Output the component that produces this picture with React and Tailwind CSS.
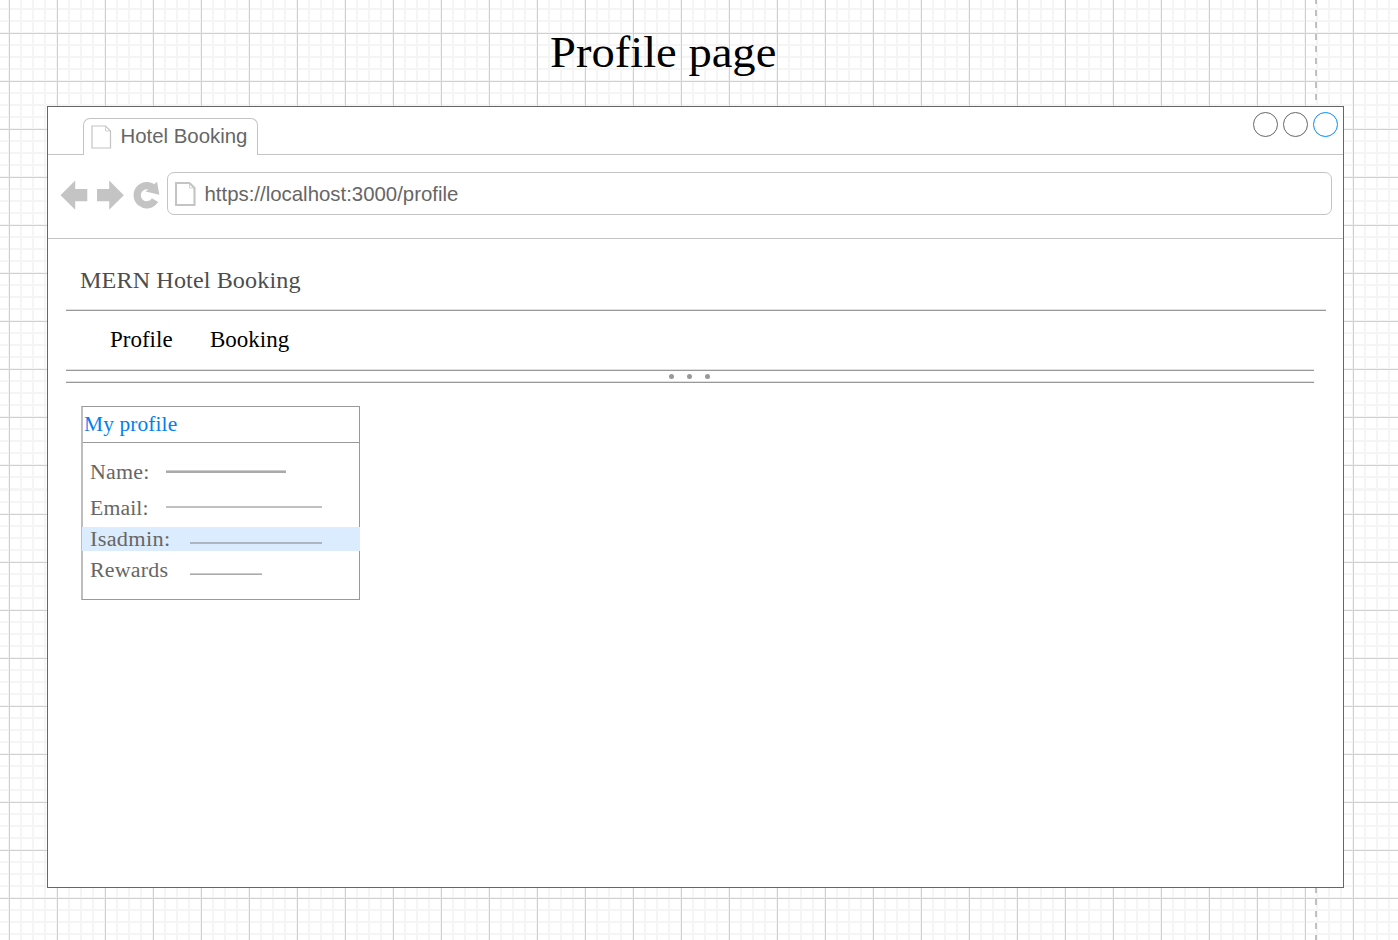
const serif = "font-['Georgia','Liberation_Serif',serif]";

function PageIcon({ className, weight }) {
  return (
    <svg className={className} viewBox="0 0 21 24" fill="none" stroke="#c4c4c4">
      <path strokeWidth={weight} d="M1 1H14.5L19.5 6V23H1Z" />
      <path strokeWidth="1" strokeOpacity="0.75" d="M14.5 1.5V6H19.5" />
    </svg>
  );
}

function Rule({ className }) {
  return <div className={`h-[2px] border-b border-[#999999] bg-[#e0e0e0] ${className}`} />;
}

function TitleBar() {
  return (
    <div className="flex h-[48px] items-end border-b border-[#c4c4c4] pl-[35px]">
      <div className="-mb-px flex h-[37px] w-[175px] items-start rounded-t-[7px] border border-b-0 border-[#c4c4c4] bg-white pl-[7px] pt-[6px]">
        <PageIcon className="h-6 w-[21px]" weight="1.2" />
        <span className="ml-[8.5px] -mt-px whitespace-nowrap text-[20.4px] leading-[24px] text-[#666666]">Hotel Booking</span>
      </div>
      <div className="mb-[17px] ml-auto mr-[5px] flex gap-[5px]">
        <div className="size-[25px] rounded-full border-[1.3px] border-[#666666]" />
        <div className="size-[25px] rounded-full border-[1.3px] border-[#666666]" />
        <div className="size-[25px] rounded-full border-[1.3px] border-[#008cff]" />
      </div>
    </div>
  );
}

function AddressBar() {
  return (
    <div className="flex h-[84px] items-start border-b border-[#c4c4c4] pl-[12px] pt-[17px]">
      <svg className="h-[43px] w-[100px] shrink-0" viewBox="60 172 100 43">
        <path fill="#c4c4c4" d="M60.5 195.2 75.2 180.6V189H87.3V201.3H75.2V209.8Z" />
        <path fill="#c4c4c4" d="M123.8 195.2 109.2 180.6V189H97V201.3H109.2V209.8Z" />
        <path fill="none" stroke="#c4c4c4" strokeWidth="7.2" d="M155 200.1A9.6 9.6 0 1 1 154.4 189.4" />
        <path fill="#c4c4c4" d="M157 181.8 159.4 194.8 145.6 191.6Z" />
      </svg>
      <div className="ml-[7px] flex h-[43px] w-[1165px] items-start rounded-[7px] border border-[#c4c4c4] pl-[7px] pt-[9px]">
        <PageIcon className="h-6 w-[21px]" weight="2.1" />
        <span className="ml-[8.5px] whitespace-nowrap text-[20.4px] leading-[24px] text-[#666666]">https://localhost:3000/profile</span>
      </div>
    </div>
  );
}

function CardLabel({ children, className, text }) {
  return (
    <span className={className}>
      <span className={`inline-block origin-left whitespace-nowrap ${text}`}>{children}</span>
    </span>
  );
}

function ProfileCard() {
  return (
    <div className="ml-[33px] mt-[23px] flex h-[194px] w-[279px] flex-col border border-l-2 border-[#999999] border-l-[#bdbdbd] text-[20.5px] leading-[24px] text-[#666666]">
      <div className="h-[36px] border-b border-[#999999] pl-px pt-[5px] text-[#0080f0]">
        <span className="inline-block origin-left scale-x-[1.045] tracking-[0.1px]">My profile</span>
      </div>
      <div className="flex h-[48px] items-start pl-[7px] pt-[17px]">
        <CardLabel className="w-[76px]" text="scale-x-[1.07] tracking-[0.2px]">Name:</CardLabel>
        <div className="mt-[10px] h-[3px] w-[120px] border-t border-[#cccccc] bg-[#aaaaaa]" />
      </div>
      <div className="flex h-[36px] items-start pl-[7px] pt-[5px]">
        <CardLabel className="w-[76px]" text="scale-x-[1.06] tracking-[0.1px]">Email:</CardLabel>
        <div className="mt-[10px] h-[2px] w-[156px] bg-[#c0c0c0]" />
      </div>
      <div className="relative -ml-px -mr-px flex h-[24px] items-start bg-[#dbecfe] pl-[8px]">
        <CardLabel className="w-[100px]" text="scale-x-[1.09] tracking-[0.25px]">Isadmin:</CardLabel>
        <div className="mt-[15px] h-[2px] w-[132px] bg-[#adb5be]" />
      </div>
      <div className="flex items-start pl-[7px] pt-[7px]">
        <CardLabel className="w-[100px]" text="scale-x-[1.07] tracking-[0.2px]">Rewards</CardLabel>
        <div className="mt-[15px] h-[2px] w-[72px] border-b border-[#aaaaaa] bg-[#cccccc]" />
      </div>
    </div>
  );
}

function BrowserWindow() {
  return (
    <main className="relative ml-[47px] h-[782px] w-[1297px] border border-[#666666] bg-white">
      <TitleBar />
      <AddressBar />
      <div className={serif}>
        <div className="h-[70px] pl-[32px] pt-[28px] text-[23px] leading-[28px] text-[#4d4d4d]">
          <span className="inline-block origin-left scale-x-[1.05] tracking-[0.1px]">MERN Hotel Booking</span>
        </div>
        <Rule className="ml-[18px] w-[1260px]" />
        <nav className="flex h-[58px] pl-[62px] pt-[15px] text-[23px] leading-[28px] text-black">
          <span className="w-[100px]">Profile</span>
          <span>Booking</span>
        </nav>
        <Rule className="ml-[18px] w-[1248px]" />
        <div className="flex h-[10px] items-center justify-center gap-[13px] pr-[12px] pt-px">
          <i className="size-[5px] rounded-full bg-[#999999]" />
          <i className="size-[5px] rounded-full bg-[#999999]" />
          <i className="size-[5px] rounded-full bg-[#999999]" />
        </div>
        <Rule className="ml-[18px] w-[1248px]" />
        <ProfileCard />
      </div>
    </main>
  );
}

const grid =
  "bg-[linear-gradient(to_right,#d0d0d0_1px,transparent_1px),linear-gradient(to_bottom,#d0d0d0_1px,transparent_1px),linear-gradient(to_right,#f5f5f5_2px,transparent_2px),linear-gradient(to_bottom,#f5f5f5_2px,transparent_2px)] bg-[size:48px_48px,48px_48px,12px_12px,12px_12px]";

export default function App() {
  return (
    <div className="relative h-[940px] w-[1398px] overflow-hidden bg-white font-['Liberation_Sans',Arial,sans-serif]">
      {/* Canvas grid: heavy lines every 48px over light lines every 12px */}
      <div className={`absolute inset-x-0 top-0 h-[490px] bg-[position:9px_33px,9px_33px,8px_8px,8px_8px] ${grid}`} />
      <div className={`absolute inset-x-0 top-[490px] h-[450px] bg-[position:9px_24px,9px_24px,8px_11px,8px_11px] ${grid}`} />
      {/* Page boundary */}
      <div className="absolute left-[1315px] top-0 h-[106px] w-[2px] bg-[repeating-linear-gradient(to_bottom,#c0c0c0_0_4px,transparent_4px_10px,#c0c0c0_10px_12px)]" />
      <div className="absolute left-[1315px] top-[887px] h-[53px] w-[2px] bg-[repeating-linear-gradient(to_bottom,#c0c0c0_0_6px,transparent_6px_12px)]" />
      <h1 className={`relative h-[106px] whitespace-nowrap pl-[550px] pt-[26px] text-[45px] leading-[52px] text-black ${serif}`}>
        <span className="inline-block origin-left scale-x-[1.035]">Profile page</span>
      </h1>
      <BrowserWindow />
    </div>
  );
}
